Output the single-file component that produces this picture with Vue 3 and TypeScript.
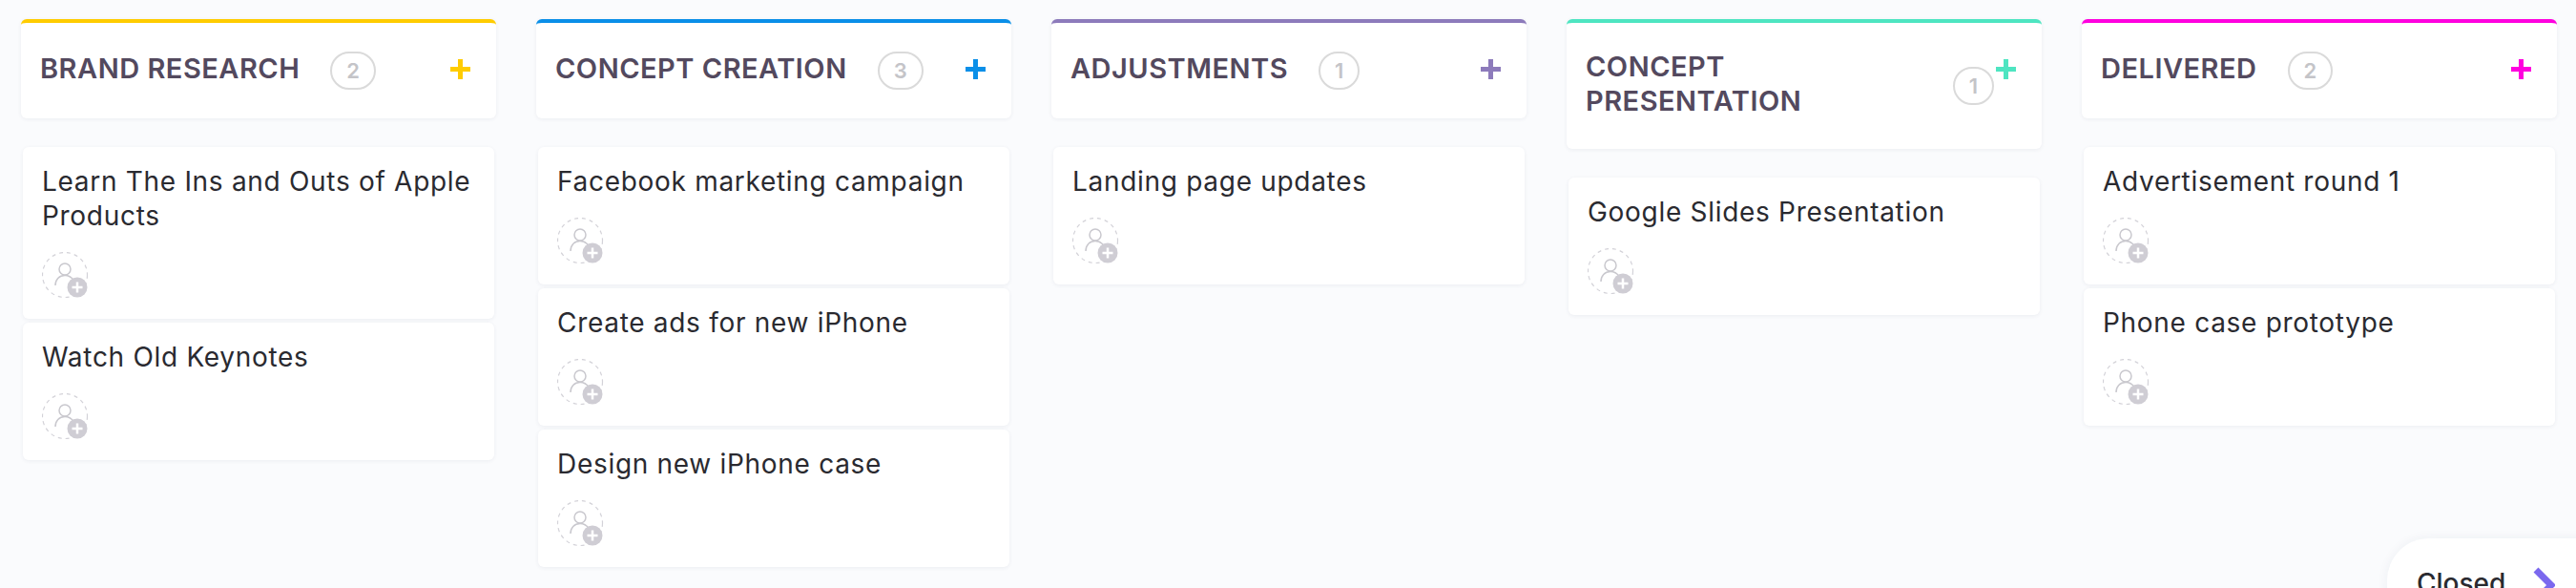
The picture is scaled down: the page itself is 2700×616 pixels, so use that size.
<script setup lang="ts">
interface Column {
  title: string;
  color: string;
  tasks: string[];
}

const columns: Column[] = [
  { title: "BRAND RESEARCH", color: "#ffcc00", tasks: ["Learn The Ins and Outs of Apple Products", "Watch Old Keynotes"] },
  {
    title: "CONCEPT CREATION",
    color: "#0a8fe8",
    tasks: ["Facebook marketing campaign", "Create ads for new iPhone", "Design new iPhone case"],
  },
  { title: "ADJUSTMENTS", color: "#8d7bbb", tasks: ["Landing page updates"] },
  { title: "CONCEPT PRESENTATION", color: "#4ee5c1", tasks: ["Google Slides Presentation"] },
  { title: "DELIVERED", color: "#ff00df", tasks: ["Advertisement round 1", "Phone case prototype"] },
];
</script>

<template>
  <main class="board">
    <section v-for="col in columns" :key="col.title" class="column">
      <header class="head" :style="{ borderTopColor: col.color }">
        <h2 class="title">{{ col.title }}</h2>
        <span class="count">{{ col.tasks.length }}</span>
        <svg class="add" width="21" height="21" viewBox="0 0 21 21" aria-hidden="true">
          <path d="M10.500 0v21M0 10.500h21" fill="none" :stroke="col.color" stroke-width="5" />
        </svg>
      </header>

      <div class="tasks">
        <article v-for="task in col.tasks" :key="task" class="task">
          <p class="name">{{ task }}</p>
          <svg class="assign" width="50" height="50" viewBox="0 0 50 50" aria-hidden="true">
            <circle cx="24" cy="24" r="23.5" fill="none" stroke="#d3d2d8" stroke-width="1.2" stroke-dasharray="4 4" />
            <circle cx="24" cy="18" r="6" fill="none" stroke="#c9c8ce" stroke-width="1.5" />
            <path d="M14 35c0-6 4-10.500 10-10.500 4 0 7 2 9 5" fill="none" stroke="#c9c8ce" stroke-width="1.5" />
            <circle cx="37" cy="37" r="10.500" fill="#cfcdd4" />
            <path d="M37 31.500v11M31.500 37h11" fill="none" stroke="#fff" stroke-width="2.500" />
          </svg>
        </article>
      </div>
    </section>

    <button class="closed">
      <span>Closed</span>
      <svg width="24" height="40" viewBox="0 0 24 40" aria-hidden="true">
        <path d="M4 4l16 16-16 16" fill="none" stroke="#7b68ee" stroke-width="7" />
      </svg>
    </button>
  </main>
</template>

<style>
html,
body {
  margin: 0;
  background: #fafbfd;
}
</style>

<style scoped>
.board {
  position: relative;
  display: flex;
  gap: 42px;
  height: 616px;
  box-sizing: border-box;
  padding: 20px 0 0 22px;
  overflow: hidden;
  font-family: Inter, "Liberation Sans", sans-serif;
}

.column {
  flex: none;
  width: 498px;
}

.head {
  display: flex;
  box-sizing: border-box;
  padding: 28px 27px 32px 20px;
  align-items: center;
  background: #fff;
  border-top: 4px solid;
  border-radius: 6px;
  box-shadow: 0 1px 4px rgba(40, 50, 80, 0.07);
}

.title {
  display: flex;
  align-items: center;
  min-height: 40px;
  margin: 0;
  color: #53495e;
  font-size: 29px;
  font-weight: 600;
  line-height: 36px;
  letter-spacing: 0.5px;
}

.count {
  display: flex;
  flex: none;
  align-items: center;
  box-sizing: border-box;
  height: 40px;
  padding: 0 15px;
  margin: 2px 2px -2px 32px;
  color: #c4c4c8;
  font-size: 22px;
  font-weight: 600;
  border: 2px solid #dadada;
  border-radius: 20px;
}

.add {
  flex: none;
  align-self: flex-start;
  margin: 10px 0 0 auto;
}

.tasks {
  display: flex;
  flex-direction: column;
  gap: 4px;
  margin: 30px 2px 0;
}

.task {
  box-sizing: border-box;
  padding: 18px 20px 20px;
  background: #fff;
  border-radius: 6px;
  box-shadow: 0 1px 4px rgba(40, 50, 80, 0.07);
}

.name {
  margin: 0 0 20px;
  color: #2a2a30;
  font-size: 28px;
  line-height: 36px;
  letter-spacing: 0.7px;
}

.assign {
  display: block;
}

.closed {
  position: absolute;
  top: 564px;
  left: 2502px;
  display: flex;
  gap: 28px;
  align-items: flex-start;
  width: 260px;
  height: 120px;
  padding: 29px 0 0 31px;
  color: #2a2a30;
  font: 500 28px/36px Inter, "Liberation Sans", sans-serif;
  background: #fff;
  border: 0;
  border-radius: 44px;
  box-shadow: 0 0 12px rgba(40, 50, 80, 0.06);
}
</style>
